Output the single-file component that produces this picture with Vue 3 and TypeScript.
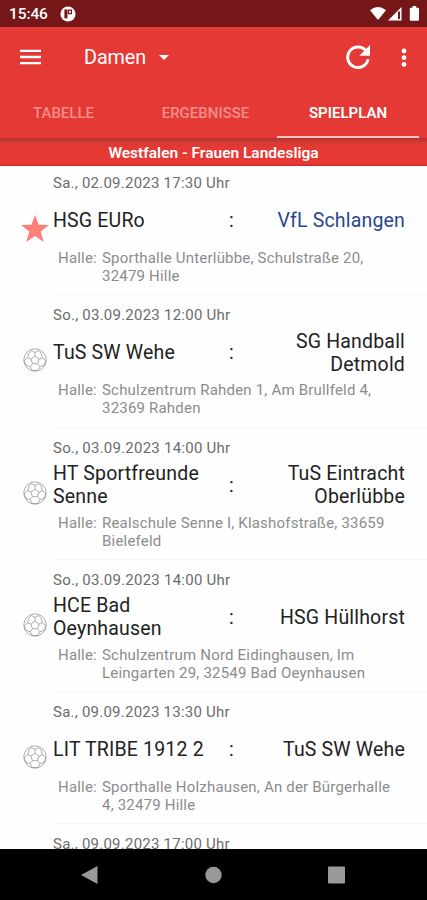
<script setup lang="ts">
interface Match {
  date: string
  home?: string
  away?: string
  hall?: string
  favourite?: boolean
  linked?: boolean
}

const tabs: string[] = ['TABELLE', 'ERGEBNISSE', 'SPIELPLAN']
const activeTab = 'SPIELPLAN'

const matches: Match[] = [
  { date: 'Sa., 02.09.2023 17:30 Uhr', home: 'HSG EURo', away: 'VfL Schlangen', hall: 'Sporthalle Unterlübbe, Schulstraße 20,\n32479 Hille', favourite: true, linked: true },
  { date: 'So., 03.09.2023 12:00 Uhr', home: 'TuS SW Wehe', away: 'SG Handball\nDetmold', hall: 'Schulzentrum Rahden 1, Am Brullfeld 4,\n32369 Rahden' },
  { date: 'So., 03.09.2023 14:00 Uhr', home: 'HT Sportfreunde\nSenne', away: 'TuS Eintracht\nOberlübbe', hall: 'Realschule Senne I, Klashofstraße, 33659\nBielefeld' },
  { date: 'So., 03.09.2023 14:00 Uhr', home: 'HCE Bad\nOeynhausen', away: 'HSG Hüllhorst', hall: 'Schulzentrum Nord Eidinghausen, Im\nLeingarten 29, 32549 Bad Oeynhausen' },
  { date: 'Sa., 09.09.2023 13:30 Uhr', home: 'LIT TRIBE 1912 2', away: 'TuS SW Wehe', hall: 'Sporthalle Holzhausen, An der Bürgerhalle\n4, 32479 Hille' },
  { date: 'Sa., 09.09.2023 17:00 Uhr' },
]
</script>

<template>
  <div class="screen">
    <header class="status">
      <span class="clock">15:46</span>
      <svg class="notif" viewBox="0 0 16 16">
        <circle cx="8" cy="8" r="7.6" fill="#fff" />
        <path d="M4.4 3.4h3v9h-3z" fill="#751719" />
        <path d="M8.4 4.1h3v3.6h-3z" fill="none" stroke="#751719" stroke-width="1.3" />
      </svg>
      <svg class="sys" viewBox="0 0 50 16">
        <path d="M0 4.2Q8 -2.2 16 4.2L8 14z" fill="#fff" />
        <path d="M31.5 1v13.5H18z" fill="#fff" />
        <path d="M28 5.5h2v7.5h-2z" fill="#751719" />
        <path d="M40.8 1.7h1.7V0h3.7v1.7H48q1 0 1 1v11q0 1-1 1h-7.2q-1 0-1-1v-11q0-1 1-1z" fill="#fff" />
      </svg>
    </header>

    <div class="bar">
      <svg class="menu" viewBox="0 0 21 16"><path d="M0 1.8h21M0 8h21M0 14.2h21" stroke="#fff" stroke-width="2.3" /></svg>
      <span class="title">Damen</span>
      <svg class="caret" viewBox="0 0 10 5"><path d="M0 0h10L5 5z" fill="#fff" /></svg>
      <svg class="refresh" viewBox="0 0 26 26">
        <path d="M21.3 7.1A10.3 10.3 0 1 0 23.1 15.2" fill="none" stroke="#fff" stroke-width="3" />
        <path d="M25 1v10.8H14.4z" fill="#fff" />
      </svg>
      <svg class="more" viewBox="0 0 6 20"><g fill="#fff"><circle cx="3" cy="3" r="2.4" /><circle cx="3" cy="9.7" r="2.4" /><circle cx="3" cy="16.4" r="2.4" /></g></svg>
    </div>

    <nav class="tabs">
      <div v-for="t in tabs" :key="t" class="tab" :class="{ active: t === activeTab }"><span>{{ t }}</span></div>
    </nav>
    <div class="league"><span>Westfalen - Frauen Landesliga</span></div>

    <main class="list">
      <article v-for="(m, i) in matches" :key="i" class="match" :class="{ peek: !m.home }">
        <div class="icon">
          <svg v-if="m.favourite" class="star" viewBox="0 0 28 27">
            <path d="M14 0l3.6 9.7L28 10l-8.2 6.5L22.7 27 14 21 5.3 27l2.9-10.5L0 10l10.4-.3z" fill="#ff7f7b" />
          </svg>
          <svg v-else-if="m.home" class="ball" viewBox="0 0 24 24">
            <g fill="none" stroke="#999" stroke-width=".8" stroke-linejoin="round">
              <circle cx="12" cy="12" r="11.2" />
              <path d="M12 8.2l4 2.9-1.5 4.6h-5L8 11.1zM12 8.2V4.5M16 11.1l3.4-1.3M14.5 15.7l2.4 3M9.5 15.7l-2.4 3M8 11.1L4.6 9.8M12 4.5L8.2 2.4M12 4.5l3.8-2.1M19.4 9.8l-1.2-4.3-2.4-3.1M19.4 9.8l3.4 3M16.9 18.7l4.1-1.4 1.8-4.5M16.9 18.7l-2.2 3.8M7.1 18.7L3 17.3l-1.8-4.5M7.1 18.7l2.2 3.8M4.6 9.8l1.2-4.3 2.4-3.1M4.6 9.8l-3.4 3M9.3 22.5h5.4" />
            </g>
          </svg>
        </div>
        <div class="body">
          <div class="date">{{ m.date }}</div>
          <template v-if="m.home">
            <div class="teams">
              <span class="home">{{ m.home }}</span>
              <span class="colon">:</span>
              <span class="away" :class="{ linked: m.linked }">{{ m.away }}</span>
            </div>
            <div class="hall"><span class="label">Halle:</span><span class="address">{{ m.hall }}</span></div>
          </template>
        </div>
      </article>
    </main>

    <footer class="navbar">
      <svg viewBox="0 0 17 20"><path d="M16.5 1v18L0 10z" fill="#999" /></svg>
      <svg viewBox="0 0 17 20"><circle cx="8.5" cy="10" r="8.2" fill="#999" /></svg>
      <svg viewBox="0 0 17 20"><rect y="1.5" width="17" height="17" rx="1" fill="#999" /></svg>
    </footer>
  </div>
</template>

<style>
body { margin: 0; }
</style>

<style scoped>
.screen { width: 427px; height: 900px; display: flex; flex-direction: column; overflow: hidden; background: #fefefe; font-family: Roboto, sans-serif; }
.status { height: 27px; flex: none; box-sizing: border-box; display: flex; align-items: center; background: #751719; padding: 1px 7px 0 9px; }
.clock { color: #fff; font-size: 15.5px; font-weight: 500; letter-spacing: -.1px; line-height: 18px; width: 51px; }
.notif { width: 16px; height: 16px; }
.sys { width: 50px; height: 16px; margin-left: auto; }
.bar { height: 61px; flex: none; display: flex; align-items: center; background: #e53935; padding: 0 20px; color: #fff; }
.menu { width: 21px; height: 16px; margin-top: -2px; }
.title { font-size: 19.8px; margin-left: 43px; width: 75px; letter-spacing: -.1px; }
.caret { width: 10px; height: 5px; }
.refresh { width: 26px; height: 26px; margin-left: auto; margin-top: -2px; }
.more { width: 6px; height: 20px; margin-left: 30px; }
.tabs { height: 51px; flex: none; display: flex; background: #e53935; padding-right: 8px; box-sizing: border-box; border-bottom: 1px solid #bd302e; }
.tab { box-sizing: border-box; display: flex; justify-content: center; align-items: center; width: 127px; height: 50px; padding-top: 2px; color: #f48e8b; font-size: 15px; font-weight: 500; border-bottom: 2px solid transparent; }
.tab:nth-child(2) { width: 150px; padding-left: 7px; }
.tab.active { width: 142px; color: #fff; font-weight: 600; border-bottom-color: #f9c3c1; }
.league { height: 27px; flex: none; box-sizing: border-box; padding-top: 1px; display: flex; align-items: center; justify-content: center; background: linear-gradient(#b93330, #d83935 4px, #e53935 8px, #e53935 25px, #dc201f); color: #fff; font-size: 15.5px; font-weight: 600; }
.list { flex: 1; min-height: 0; overflow: hidden; padding-left: 21px; }
.match { height: 132.25px; display: flex; }
.match:first-child { margin-top: -3px; }
.match.peek { height: 30px; }
.icon { width: 32px; padding-top: 53px; flex: none; }
.peek .icon { padding-top: 0; }
.star { width: 28px; height: 27px; display: block; margin-top: -1px; }
.ball { width: 24px; height: 24px; display: block; margin: 0 0 0 2px; }
.body { flex: 1; border-bottom: 1px solid #f6f6f6; box-sizing: border-box; padding-right: 22px; }
.peek .body { border-bottom: 0; }
.date { padding-top: 12px; height: 17px; line-height: 17px; font-size: 15px; letter-spacing: .24px; color: #6c6c6c; }
.teams { height: 57px; display: grid; grid-template-columns: 165px 27px 1fr; align-items: center; font-size: 19.5px; line-height: 23px; letter-spacing: .18px; color: #222; white-space: pre-line; }
.colon { text-align: center; }
.away { text-align: right; }
.linked { color: #2b468f; }
.hall { display: flex; padding-left: 5px; font-size: 15px; letter-spacing: .2px; line-height: 18px; color: #8c8c8c; white-space: pre; }
.label { width: 44px; }
.navbar { height: 51px; flex: none; display: flex; align-items: center; justify-content: space-between; background: #000; padding: 0 82px 0 81px; box-sizing: border-box; }
.navbar svg { width: 17px; height: 20px; }
</style>
